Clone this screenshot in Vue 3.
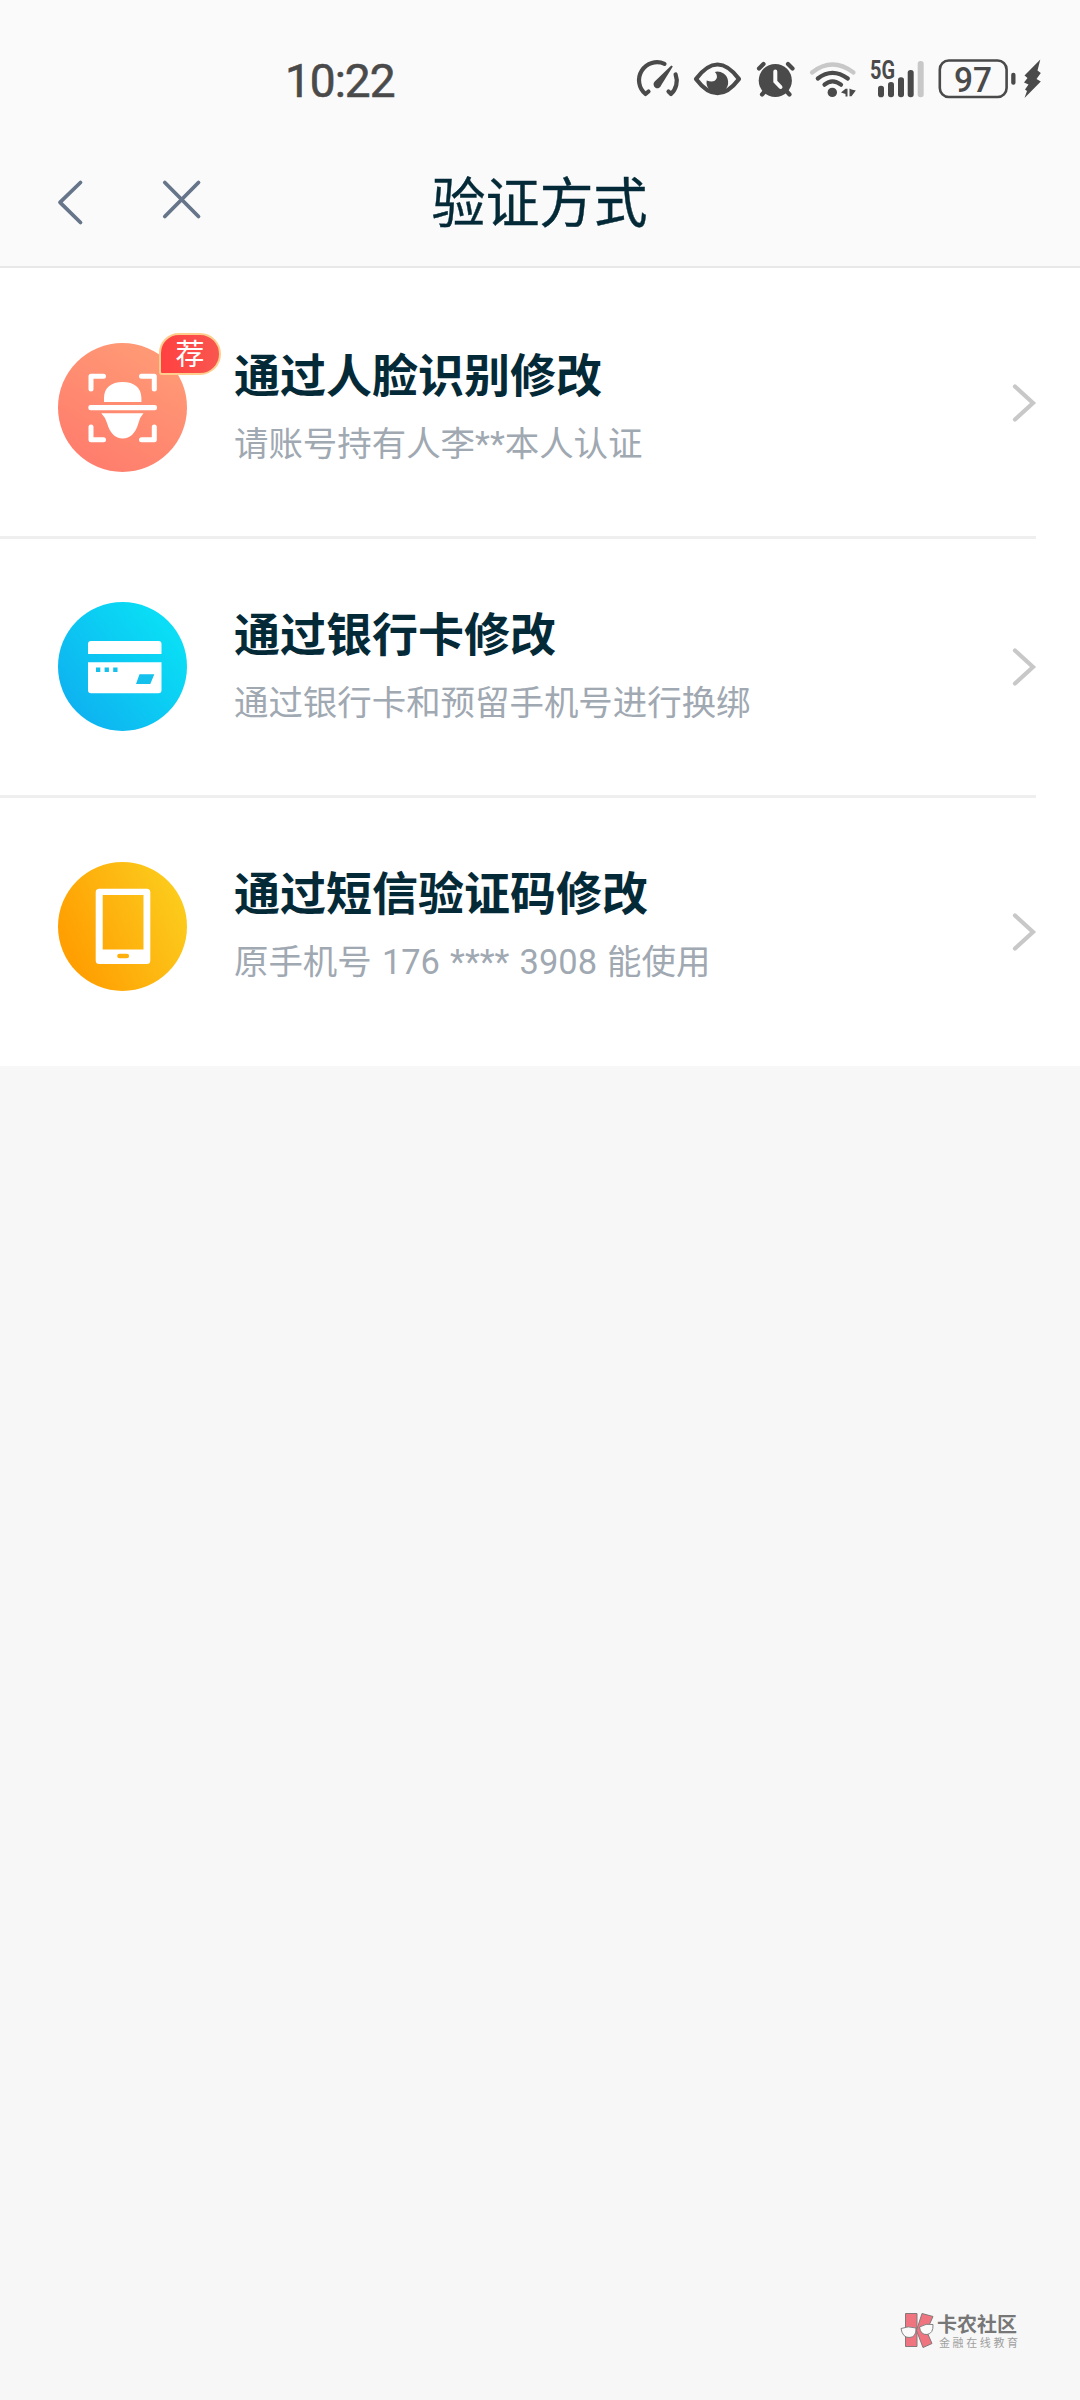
<script setup>
const methods = [
  { id: 'face', title: '通过人脸识别修改', desc: '请账号持有人李**本人认证', badge: '荐' },
  { id: 'card', title: '通过银行卡修改', desc: '通过银行卡和预留手机号进行换绑' },
  { id: 'sms', title: '通过短信验证码修改', desc: '原手机号 176 **** 3908 能使用' },
]
</script>

<template>
  <div class="screen">
    <header class="top">
      <div class="status">
        <span class="time">10:22</span>
        <svg class="status-icons" viewBox="630 50 420 56" width="420" height="56">
          <g fill="none" stroke="#4a4a4a" stroke-width="4.2" stroke-linecap="round" stroke-linejoin="round">
            <path d="M664.500 63.800A18 18 0 0 0 645.500 94L648.500 91.500" />
            <path d="M675.600 74.500A18 18 0 0 1 671 94L668.500 91.500" />
            <path d="M696 79Q717.500 50 739 79Q717.500 107.500 696 79Z" />
            <path d="M759 68.500L763.500 64M788 64L792.500 68.500M762 94.500L766 90M789.500 94.500L785.500 90" />
            <path d="M817.800 78.500Q832.300 67.300 847.800 78.500M824.500 84.700Q832.300 78 841 84.700" />
            <path d="M812 72.500Q832.300 56.500 853.500 72.500" stroke="#c8c8c8" />
          </g>
          <path d="M671.300 65.500L654.700 81.500A3.900 3.900 0 1 0 661.200 85.300L672.800 66.600Z" fill="#4a4a4a" />
          <path d="M714.800 71.900A10.800 10.800 0 1 1 706.700 80.500Q714.500 83.500 716.800 78Q717.500 74.500 714.800 71.900Z" fill="#4a4a4a" />
          <circle cx="775.300" cy="80.500" r="16.600" fill="#4a4a4a" />
          <path d="M775.300 71.500V81.500L780.500 87" fill="none" stroke="#fafafa" stroke-width="4" stroke-linecap="round" />
          <circle cx="832.300" cy="92.400" r="4.700" fill="#4a4a4a" />
          <path d="M841 92.500L845.500 88.700H847.500V96.500H845.500V94ZM849.500 88.500L851.500 89.500L855.800 90.500L851.500 96.300H849.500Z" fill="#4a4a4a" />
          <text x="870" y="79" class="net" textLength="25" lengthAdjust="spacingAndGlyphs">5G</text>
          <g fill="#4a4a4a">
            <rect x="878" y="85.700" width="6" height="11.600" rx="2.800" />
            <rect x="888" y="82" width="6" height="15.300" rx="2.800" />
            <rect x="898" y="77.300" width="6" height="20" rx="2.800" />
            <rect x="907.700" y="70" width="6" height="27.300" rx="2.800" />
            <rect x="917.700" y="61" width="6" height="36.300" rx="2.800" fill="#c8c8c8" />
            <rect x="1011.200" y="72.700" width="4.300" height="12" rx="2" />
            <path d="M1040.300 59.500L1024.500 75.500L1027.500 78L1024 82.500L1028.500 84.500L1025 89.500L1027 91L1024.500 98L1040.800 81.500L1036.500 79L1040.800 73L1037.500 70.500Z" />
          </g>
          <rect x="939.800" y="60.500" width="66.800" height="36.500" rx="9" fill="none" stroke="#4a4a4a" stroke-width="2.600" />
          <text x="954" y="91.500" class="level" textLength="38" lengthAdjust="spacingAndGlyphs">97</text>
        </svg>
      </div>
      <nav class="nav">
        <svg class="nav-icons" viewBox="50 170 160 64" width="160" height="64">
          <path d="M80.500 182.500L60 202.300L80.500 222.500M164.800 182.500L198.500 216.500M198.500 182.500L164.800 216.500" fill="none" stroke="#66758a" stroke-width="3.800" stroke-linecap="round" stroke-linejoin="round" />
        </svg>
        <h1>验证方式</h1>
        <div class="nav-end"></div>
      </nav>
    </header>

    <main class="list">
      <section v-for="m in methods" :key="m.id" class="row" :class="m.id">
        <div class="icon">
          <svg v-if="m.id === 'face'" viewBox="0 0 129 129">
            <defs><linearGradient id="gf" x1="0.8" y1="0" x2="0.2" y2="1"><stop stop-color="#ff9c76" /><stop offset="1" stop-color="#ff7b6c" /></linearGradient></defs>
            <circle cx="64.500" cy="64.500" r="64.500" fill="url(#gf)" />
            <path d="M33 46V33.200H45.500M83.500 33.200H96.300V46M96.300 84V96.800H83.500M45.500 96.800H33V84" fill="none" stroke="#fff" stroke-width="5" stroke-linecap="round" stroke-linejoin="round" />
            <path d="M46 59V55C46 45 53 39 64.700 39S83.400 45 83.400 55V59ZM43.300 70.300H85.500Q82 74 80.500 80Q76 95.500 64.700 95.500Q53.500 95.500 49 80Q47 74 43.300 70.300Z" fill="#fff" />
            <rect x="30.300" y="62" width="68.700" height="5.300" rx="2.200" fill="#fff" />
          </svg>
          <svg v-else-if="m.id === 'card'" viewBox="0 0 129 129">
            <defs><linearGradient id="gc" x1="0.15" y1="0.9" x2="0.9" y2="0.3"><stop stop-color="#0eb2f0" /><stop offset="1" stop-color="#0addf5" /></linearGradient></defs>
            <circle cx="64.500" cy="64.500" r="64.500" fill="url(#gc)" />
            <path d="M30 52V42Q30 39 33 39H100.500Q103.500 39 103.500 42V52ZM30 60.300H103.500V88.300Q103.500 91.300 100.500 91.300H33Q30 91.300 30 88.300Z" fill="#fff" />
            <path d="M38 65.500H42.300V70H38ZM46.600 65.500H50.900V70H46.600ZM55.200 65.500H59.500V70H55.200ZM81.500 72.300H96.300L92.300 82H78Z" fill="#13c1ec" />
          </svg>
          <svg v-else viewBox="0 0 129 129">
            <defs><linearGradient id="gs" x1="0.1" y1="0.7" x2="0.95" y2="0.3"><stop stop-color="#ff9f02" /><stop offset="1" stop-color="#fccb1c" /></linearGradient></defs>
            <circle cx="64.500" cy="64.500" r="64.500" fill="url(#gs)" />
            <path fill-rule="evenodd" d="M41.200 26.800H88.800Q92.300 26.800 92.300 30.300V98.500Q92.300 102 88.800 102H41.200Q37.700 102 37.700 98.500V30.300Q37.700 26.800 41.200 26.800ZM44.700 33V87.500H85.500V33ZM61.500 91.700A2.300 2.300 0 0 0 61.500 96.300H68.800A2.300 2.300 0 0 0 68.800 91.700Z" fill="#fff" />
          </svg>
          <span v-if="m.badge" class="badge">{{ m.badge }}</span>
        </div>
        <div class="copy">
          <h2>{{ m.title }}</h2>
          <p>{{ m.desc }}</p>
        </div>
        <svg class="arrow" viewBox="0 0 26 40" width="26" height="40">
          <path d="M4 3.500L22 20L4 36.500" fill="none" stroke="#c8c8c8" stroke-width="4.200" stroke-linecap="round" stroke-linejoin="miter" />
        </svg>
      </section>
    </main>

    <footer class="mark">
      <svg viewBox="0 0 34 38" width="34" height="38">
        <g fill="#f0747f" stroke="#85787a" stroke-width="1">
          <path d="M5.500 1.500H17V34.500H5.500Z" />
          <path d="M22 1.500L33 4.500L26.500 19L32 31.500L23 35.500L16.500 18.500Z" />
        </g>
        <g fill="#fafafa" stroke="#777" stroke-width="0.900">
          <path d="M1 16.500Q8 13.500 16 16Q16.500 25.500 9 25.500Q2.500 25.500 1 16.500Z" />
          <path d="M19.500 15Q26 11 33 12.500Q33.500 21.500 27 22.500Q20.500 23 19.500 15Z" />
        </g>
      </svg>
      <div class="mark-text">
        <strong>卡农社区</strong>
        <span>金融在线教育</span>
      </div>
    </footer>
  </div>
</template>

<style>
body { background: #f7f7f7; }
</style>

<style scoped>
* { box-sizing: border-box; margin: 0; }
.screen {
  width: 1080px;
  height: 2400px;
  display: flex;
  flex-direction: column;
  background: #f7f7f7;
  font-family: Roboto, "Noto Sans CJK SC", sans-serif;
  overflow: hidden;
}
.top {
  height: 268px;
  background: #fafafa;
  border-bottom: 2px solid #e8e8e8;
  flex: none;
}
.status {
  height: 156px;
  display: flex;
  align-items: center;
  justify-content: space-between;
  padding: 0 30px 0 285px;
}
.time {
  font-size: 46px;
  font-weight: 400;
  line-height: 54px;
  letter-spacing: -1px;
  color: #4a4a4a;
  -webkit-text-stroke: 0.6px #4a4a4a;
  margin-top: 5px;
}
.net { font: 700 25px Roboto, sans-serif; fill: #4a4a4a; }
.level { font: 500 35px Roboto, sans-serif; fill: #4a4a4a; }
.nav {
  height: 92px;
  display: flex;
  align-items: center;
  justify-content: space-between;
  padding: 0 50px;
}
.nav-end { width: 160px; }
h1 {
  font: 400 54px/80px "Noto Sans CJK SC", sans-serif;
  color: #042a38;
  -webkit-text-stroke: 0.4px #042a38;
  margin-bottom: 5px;
  margin-right: 1px;
}
.list { background: #fff; flex: none; }
.row {
  height: 259px;
  display: flex;
  padding: 64px 43px 0 58px;
  position: relative;
}
.row.face { height: 270px; padding-top: 75px; }
.row.sms { height: 269px; padding-top: 65px; }
.row:not(.sms)::after {
  content: "";
  position: absolute;
  left: 0;
  right: 44px;
  bottom: -1px;
  height: 3px;
  background: #efefef;
}
.icon { width: 129px; height: 129px; position: relative; flex: none; }
.icon svg { display: block; width: 129px; height: 129px; }
.badge {
  position: absolute;
  left: 101px;
  top: -10px;
  width: 62px;
  height: 42px;
  border: 2.5px solid #ffcd8c;
  border-radius: 20px 21px 21px 3px;
  background: linear-gradient(90deg, #ff4141, #f9564f);
  color: #fff;
  font: 400 29px/34px "Noto Sans CJK SC", sans-serif;
  text-align: center;
}
.copy { margin-left: 47px; margin-top: -4px; flex: 1; }
.sms .copy { margin-top: -5px; }
h2 {
  font: 700 46px/66px "Noto Sans CJK SC", sans-serif;
  color: #042a38;
  white-space: nowrap;
}
p {
  font-size: 34.45px;
  line-height: 50px;
  margin-top: 14px;
  color: #a0a8b2;
  white-space: nowrap;
}
.sms p { word-spacing: 1.6px; }
.arrow { align-self: center; margin-top: -65px; flex: none; }
.face .arrow { margin-top: -75px; }
.mark {
  margin-top: auto;
  margin-bottom: 50px;
  padding-right: 61px;
  display: flex;
  justify-content: flex-end;
  gap: 3px;
}
.mark-text {
  width: 82px;
  display: flex;
  flex-direction: column;
  font-family: "Noto Sans CJK SC", sans-serif;
  white-space: nowrap;
}
strong { font-size: 20px; line-height: 24px; font-weight: 700; color: #777; }
.mark-text span { font-size: 11px; line-height: 12px; letter-spacing: 2.600px; color: #a0a0a0; padding-left: 2px; }
</style>
